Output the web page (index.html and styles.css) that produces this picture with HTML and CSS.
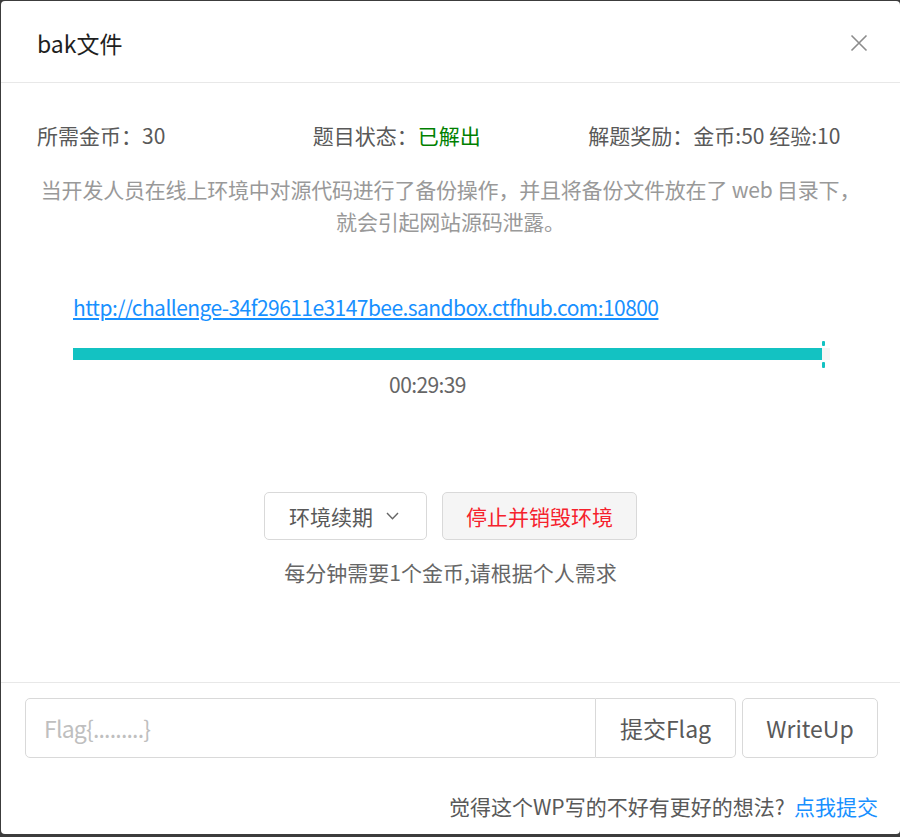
FILE: index.html
```html
<!DOCTYPE html>
<html lang="zh-CN">
<head>
<meta charset="utf-8">
<title>bak文件</title>
<link rel="stylesheet" href="styles.css">
</head>
<body>
<div class="modal">
  <div class="modal-header">
    <div class="modal-title">bak文件</div>
    <button class="close" aria-label="关闭">
      <svg width="18" height="18" viewBox="0 0 18 18"><path d="M1.5 1.5 L16.5 16.5 M16.5 1.5 L1.5 16.5" stroke="#8c8c8c" stroke-width="1.6" fill="none"/></svg>
    </button>
  </div>
  <div class="modal-body">
    <div class="info-row">
      <div class="info">所需金币：30</div>
      <div class="info">题目状态：<span class="solved">已解出</span></div>
      <div class="info">解题奖励：金币:50 经验:10</div>
    </div>
    <p class="desc">当开发人员在线上环境中对源代码进行了备份操作，并且将备份文件放在了 web 目录下，就会引起网站源码泄露。</p>
    <div class="env">
      <a class="env-link" href="#">http://challenge-34f29611e3147bee.sandbox.ctfhub.com:10800</a>
      <div class="progress">
        <div class="progress-fill" style="width: 98.9%"></div>
        <span class="marker marker-top" style="left: 98.9%"></span>
        <span class="marker marker-bottom" style="left: 98.9%"></span>
      </div>
      <div class="time">00:29:39</div>
    </div>
    <div class="actions">
      <button class="btn btn-renew">环境续期
        <svg width="13" height="8" viewBox="0 0 13 8"><path d="M1 1 L6.5 6.8 L12 1" stroke="#666" stroke-width="1.4" fill="none"/></svg>
      </button>
      <button class="btn btn-stop">停止并销毁环境</button>
    </div>
    <p class="note">每分钟需要1个金币,请根据个人需求</p>
  </div>
  <div class="modal-footer">
    <div class="flag-row">
      <div class="input-group">
        <input class="flag-input" type="text" placeholder="Flag{.........}">
        <button class="btn-submit">提交Flag</button>
      </div>
      <button class="btn-writeup">WriteUp</button>
    </div>
    <p class="feedback">觉得这个WP写的不好有更好的想法?&nbsp; <a href="#" class="feedback-link">点我提交</a></p>
  </div>
</div>
</body>
</html>
```

FILE: styles.css
```css
* { box-sizing: border-box; }

html, body {
  margin: 0;
  padding: 0;
}

body {
  background: #3c3c3c;
  width: 900px;
  height: 837px;
  overflow: hidden;
  padding: 1px 0 0 1px;
  font-family: "Noto Sans CJK SC", "Noto Sans", sans-serif;
}

.modal {
  width: 899px;
  height: 833px;
  background: #fff;
  border-radius: 4px;
  display: flex;
  flex-direction: column;
}

.modal-header {
  height: 82px;
  border-bottom: 1px solid #e8e8e8;
  display: flex;
  align-items: center;
  justify-content: space-between;
  padding: 2px 32px 0 36px;
}

.modal-title {
  font-size: 23px;
  line-height: 32px;
  color: #1f1f1f;
  font-weight: 400;
}

.close {
  border: 0;
  background: none;
  padding: 0;
  width: 18px;
  height: 18px;
  display: flex;
}

.modal-body {
  padding: 36px 36px 0 36px;
  flex: 1;
}

.info-row {
  display: grid;
  grid-template-columns: 1fr 1fr 1fr;
  font-size: 21px;
  line-height: 32px;
  color: #595959;
}

.solved { color: #008000; }

.desc {
  margin: 22px 0 0 0;
  text-align: center;
  font-size: 21px;
  line-height: 32px;
  letter-spacing: -0.2px;
  color: #999;
}

.env {
  margin-top: 54px;
  padding: 0 34px 0 36px;
}

.env-link {
  display: block;
  font-size: 21px;
  line-height: 32px;
  letter-spacing: -0.56px;
  color: #1890ff;
  text-decoration: underline;
  text-underline-offset: 2px;
}

.progress {
  position: relative;
  margin-top: 25px;
  height: 12px;
  background: #f5f5f5;
}

.progress-fill {
  height: 12px;
  background: #13c2c2;
}

.marker {
  position: absolute;
  width: 3px;
  background: #13c2c2;
  border-radius: 1px;
}

.marker-top { top: -7px; height: 5px; }
.marker-bottom { top: 14px; height: 6px; }

.time {
  margin-top: 8px;
  padding-right: 48px;
  text-align: center;
  font-size: 21px;
  line-height: 32px;
  letter-spacing: -0.6px;
  color: #666;
}

.actions {
  margin-top: 92px;
  display: flex;
  justify-content: center;
  gap: 15px;
}

.btn {
  height: 48px;
  border: 1px solid #d9d9d9;
  border-radius: 5px;
  font-family: inherit;
  font-size: 21px;
  padding: 0 23px;
  display: flex;
  align-items: center;
}

.btn-renew {
  background: #fff;
  color: #595959;
  gap: 13px;
  padding-left: 24px;
  padding-right: 27px;
}

.btn-stop {
  background: #f5f5f5;
  color: #f5222d;
}

.note {
  margin: 16px 0 0 0;
  text-align: center;
  font-size: 21px;
  line-height: 32px;
  color: #666;
}

.modal-footer {
  border-top: 1px solid #e8e8e8;
  padding: 15px 22px 12px 24px;
}

.flag-row {
  display: flex;
  gap: 6px;
}

.input-group {
  flex: 1;
  display: flex;
  height: 60px;
}

.flag-input {
  flex: 1;
  min-width: 0;
  height: 60px;
  border: 1px solid #d9d9d9;
  border-radius: 5px 0 0 5px;
  padding: 0 18px;
  font-family: inherit;
  font-size: 23px;
  letter-spacing: -0.8px;
  color: #595959;
  outline: none;
}

.flag-input::placeholder { color: #bfbfbf; }

.btn-submit {
  width: 140px;
  height: 60px;
  border: 1px solid #d9d9d9;
  border-left: 0;
  border-radius: 0 5px 5px 0;
  background: #fff;
  font-family: inherit;
  font-size: 23px;
  color: #595959;
}

.btn-writeup {
  width: 136px;
  height: 60px;
  border: 1px solid #d9d9d9;
  border-radius: 5px;
  background: #fff;
  font-family: inherit;
  font-size: 23px;
  color: #595959;
}

.feedback {
  margin: 32px 0 0 0;
  text-align: right;
  font-size: 21px;
  line-height: 32px;
  color: #595959;
}

.feedback-link {
  color: #1890ff;
  text-decoration: none;
}
```
